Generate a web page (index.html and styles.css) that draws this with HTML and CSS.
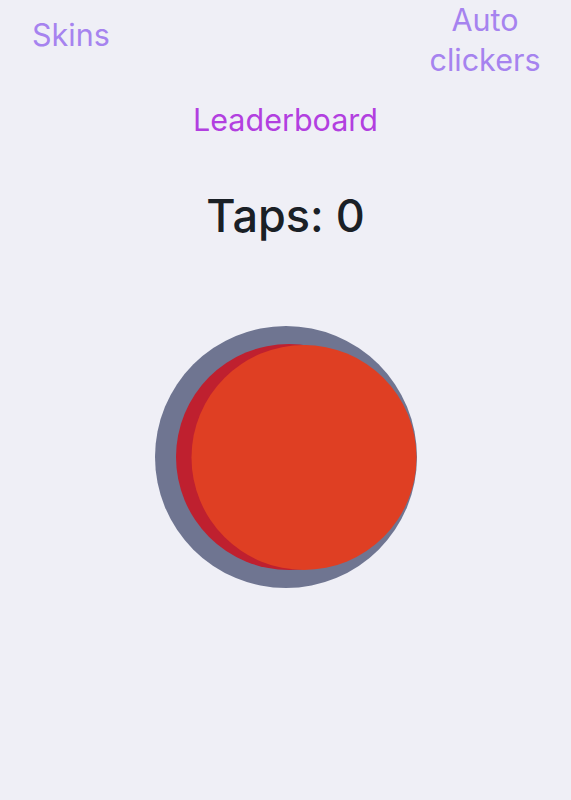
FILE: index.html
```html
<!DOCTYPE html>
<html lang="en">
<head>
<meta charset="utf-8">
<title>Tapper</title>
<link rel="stylesheet" href="styles.css">
</head>
<body>
<div class="app">
  <header class="top">
    <a class="nav nav-skins">Skins</a>
    <a class="nav nav-auto">Auto clickers</a>
  </header>
  <a class="leader">Leaderboard</a>
  <h1 class="taps">Taps: 0</h1>
  <div class="button-wrap">
    <svg class="tap-button" width="262" height="262" viewBox="0 0 262 262">
      <circle cx="131" cy="131" r="131" fill="#6f7591"/>
      <circle cx="134" cy="131" r="113" fill="#bf202f"/>
      <circle cx="149" cy="131.5" r="112.5" fill="#df3f23"/>
    </svg>
  </div>
</div>
</body>
</html>
```

FILE: styles.css
```css
html, body {
  margin: 0;
  padding: 0;
  background: #efeff6;
}
body {
  font-family: Inter, "Noto Sans", sans-serif;
  width: 571px;
  min-height: 800px;
}
.app {
  display: flex;
  flex-direction: column;
  align-items: center;
}
.top {
  align-self: stretch;
  display: flex;
  justify-content: space-between;
  align-items: flex-start;
  height: 80px;
}
.nav {
  color: #a683ef;
  font-size: 30.5px;
  line-height: 40px;
  text-align: center;
}
.nav-skins {
  margin-left: 32px;
  padding-top: 15px;
}
.nav-auto {
  width: 124px;
  margin-right: 24px;
}
.leader {
  margin-top: 20px;
  color: #b23fe0;
  font-size: 30.5px;
  line-height: 40px;
}
.taps {
  margin: 48px 0 0;
  color: #1a2026;
  font-size: 45px;
  font-weight: 500;
  line-height: 56px;
}
.button-wrap {
  margin-top: 82px;
  display: flex;
  justify-content: center;
}
.tap-button {
  display: block;
}
```
